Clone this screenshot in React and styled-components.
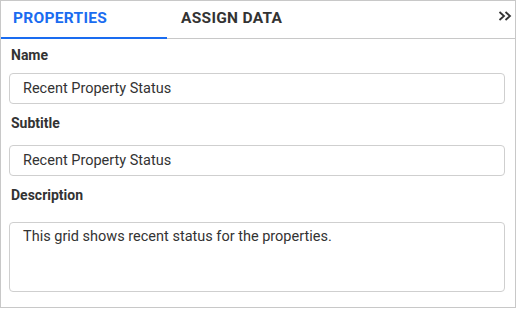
import React, { useState } from "react";
import styled, { createGlobalStyle } from "styled-components";

const GlobalStyle = createGlobalStyle`
  html, body {
    margin: 0;
    padding: 0;
    background: #fff;
  }
  body {
    font-family: Roboto, "Liberation Sans", sans-serif;
  }
`;

const Panel = styled.div`
  width: 516px;
  height: 308px;
  box-sizing: border-box;
  border: 1px solid #c8c8c8;
  background: #fff;
  display: flex;
  flex-direction: column;
`;

const TabBar = styled.div`
  display: flex;
  align-items: stretch;
  height: 38px;
  box-sizing: border-box;
  border-bottom: 1px solid #c8c8c8;
`;

const Tab = styled.button`
  background: transparent;
  border: none;
  margin: 0 0 -1px 0;
  padding: 0 0 2px ${(p) => p.$pad}px;
  width: ${(p) => p.$width}px;
  text-align: left;
  font-family: Roboto, "Liberation Sans", sans-serif;
  font-size: 15.5px;
  font-weight: 700;
  letter-spacing: 0.3px;
  color: ${(p) => (p.$active ? "#1a6cf0" : "#333")};
  border-bottom: 2px solid ${(p) => (p.$active ? "#1a6cf0" : "transparent")};
  cursor: pointer;
`;

const Spacer = styled.div`
  flex: 1;
`;

const Collapse = styled.button`
  background: transparent;
  border: none;
  padding: 0 3px 8px 0;
  display: flex;
  align-items: center;
  cursor: pointer;
`;

const Body = styled.div`
  padding: 8px 10px 0 8px;
  display: flex;
  flex-direction: column;
`;

const Label = styled.label`
  font-size: 14px;
  font-weight: 700;
  color: #333;
  line-height: 16px;
  padding-left: 2px;
  margin: ${(p) => p.$top}px 0 ${(p) => p.$bottom}px;
`;

const Input = styled.input`
  box-sizing: border-box;
  width: 100%;
  height: 31px;
  border: 1px solid #cfcfcf;
  border-radius: 4px;
  padding: 0 13px;
  font-family: Roboto, "Liberation Sans", sans-serif;
  font-size: 14.5px;
  color: #333;
  outline: none;
`;

const TextArea = styled.textarea`
  box-sizing: border-box;
  width: 100%;
  height: 70px;
  border: 1px solid #cfcfcf;
  border-radius: 4px;
  padding: 6px 13px;
  font-family: Roboto, "Liberation Sans", sans-serif;
  font-size: 14.5px;
  line-height: 16px;
  color: #333;
  resize: none;
  outline: none;
`;

const App = () => {
  const [tab, setTab] = useState("properties");
  const [name, setName] = useState("Recent Property Status");
  const [subtitle, setSubtitle] = useState("Recent Property Status");
  const [desc, setDesc] = useState(
    "This grid shows recent status for the properties."
  );

  return (
    <>
      <GlobalStyle />
      <Panel>
        <TabBar>
          <Tab
            $width={166}
            $pad={12}
            $active={tab === "properties"}
            onClick={() => setTab("properties")}
          >
            PROPERTIES
          </Tab>
          <Tab
            $width={140}
            $pad={14}
            $active={tab === "assign"}
            onClick={() => setTab("assign")}
          >
            ASSIGN DATA
          </Tab>
          <Spacer />
          <Collapse>
            <svg width="14" height="10" viewBox="0 0 14 10">
              <path
                d="M1.5 1 L6 5 L1.5 9 M7.5 1 L12 5 L7.5 9"
                fill="none"
                stroke="#333"
                strokeWidth="1.8"
              />
            </svg>
          </Collapse>
        </TabBar>
        <Body>
          <Label $top={0} $bottom={10}>Name</Label>
          <Input value={name} onChange={(e) => setName(e.target.value)} />
          <Label $top={11} $bottom={14}>Subtitle</Label>
          <Input value={subtitle} onChange={(e) => setSubtitle(e.target.value)} />
          <Label $top={11} $bottom={19}>Description</Label>
          <TextArea value={desc} onChange={(e) => setDesc(e.target.value)} />
        </Body>
      </Panel>
    </>
  );
};

export default App;
